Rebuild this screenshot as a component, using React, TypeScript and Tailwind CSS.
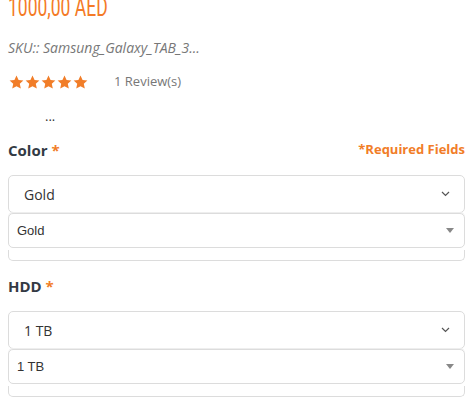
import React from 'react';

function Star() {
  return (
    <svg width="15" height="14" viewBox="0 0 24 23" fill="#f17d28">
      <path d="M12 0.8l3.4 7.3 7.9 0.9-5.9 5.4 1.7 7.9L12 18.3l-7 4 1.6-7.9L0.7 9l7.9-0.9z" />
    </svg>
  );
}

function Chevron() {
  return (
    <svg width="9" height="6" viewBox="0 0 9 6" fill="none" stroke="#555" strokeWidth="1.2">
      <path d="M1 1l3.5 3.5L8 1" />
    </svg>
  );
}

function Caret() {
  return <span className="block w-0 h-0 border-x-[4px] border-x-transparent border-t-[5px] border-t-[#888]" />;
}

function OptionGroup({ label, value }: { label: string; value: string }) {
  return (
    <div>
      <div className="flex items-baseline justify-between h-[20px]">
        <span className="text-[15px] font-bold text-[#333a44]">
          {label} <span className="text-[#f17d28]">*</span>
        </span>
      </div>
      <div className="mt-[16px] h-[38px] border border-[#dcdcdc] rounded-[5px] flex items-center justify-between pl-[15px] pr-[14px] text-[14px] text-[#333]">
        <span>{value}</span>
        <Chevron />
      </div>
      <div className="h-[35px] border border-[#dcdcdc] rounded-[5px] flex items-center justify-between pl-[8px] pr-[10px] text-[13px] text-[#333] shadow-[0_-1px_0_#eee]">
        <span className="font-['Liberation_Sans',sans-serif]">{value}</span>
        <Caret />
      </div>
      <div className="mt-[2px] h-[11px] border-x border-b border-[#dcdcdc] rounded-b-[5px]" />
    </div>
  );
}

export default function App() {
  return (
    <div className="w-[473px] h-[408px] overflow-hidden bg-white px-2 font-['Open_Sans',sans-serif]">
      {/* Price */}
      <div className="-mt-[5px] h-[26px] text-[25px] leading-[25px] text-[#f47a26] font-['Roboto',sans-serif] scale-x-[0.7] origin-left whitespace-nowrap">
        1000,00 AED
      </div>

      {/* SKU */}
      <div className="mt-[18px] text-[14px] italic text-[#777] leading-[18px]">SKU:: Samsung_Galaxy_TAB_3...</div>

      {/* Rating */}
      <div className="mt-[16px] flex items-center h-[18px]">
        <div className="flex gap-[1px] ml-[1px]">
          <Star />
          <Star />
          <Star />
          <Star />
          <Star />
        </div>
        <span className="ml-[26px] text-[13px] text-[#777]">1 Review(s)</span>
      </div>

      <div className="mt-[16px] pl-[37px] text-[13px] text-[#333] leading-[18px]">...</div>

      {/* Color */}
      <div className="mt-[14px] relative">
        <span className="absolute right-0 top-[1px] text-[13px] font-bold text-[#f17d28]">*Required Fields</span>
        <OptionGroup label="Color" value="Gold" />
      </div>

      {/* HDD */}
      <div className="mt-[14px]">
        <OptionGroup label="HDD" value="1 TB" />
      </div>
    </div>
  );
}
